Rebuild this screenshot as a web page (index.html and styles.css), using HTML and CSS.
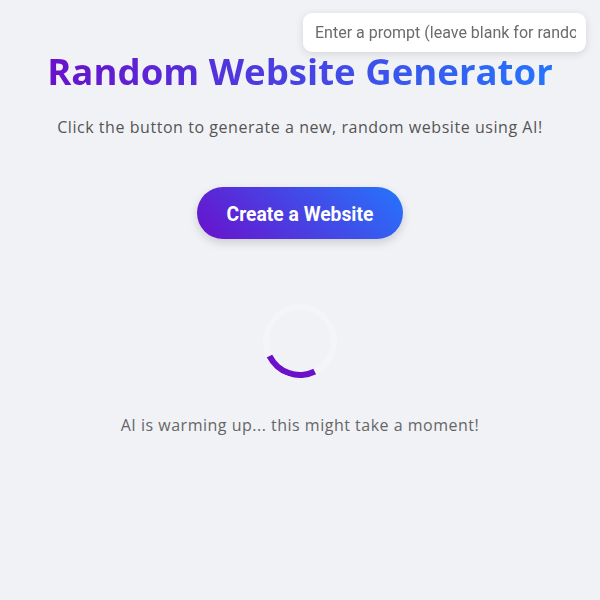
FILE: index.html
```html
<!DOCTYPE html>
<html>
<head>
<meta charset="utf-8">
<link rel="stylesheet" href="styles.css">
</head>
<body>
<div class="prompt-box"><input class="prompt" type="text" placeholder="Enter a prompt (leave blank for random)"></div>
<main class="container">
  <h1 class="title">Random Website Generator</h1>
  <p class="subtitle">Click the button to generate a new, random website using AI!</p>
  <button class="create">Create a Website</button>
  <div class="spinner"></div>
  <p class="loading">AI is warming up... this might take a moment!</p>
</main>
</body>
</html>
```
FILE: styles.css
```css
html, body { margin: 0; padding: 0; }
body {
  background: #f1f2f6;
  font-family: "Open Sans", "Liberation Sans", sans-serif;
  width: 600px;
  height: 600px;
  overflow: hidden;
}
.prompt-box {
  position: fixed;
  top: 13px;
  right: 14px;
}
.prompt {
  box-sizing: border-box;
  width: 283px;
  height: 39px;
  border: none;
  outline: none;
  border-radius: 9px;
  background: #fff;
  box-shadow: 0 2px 8px rgba(0,0,0,0.12);
  padding: 0 10px 0 12px;
  font-family: Roboto, sans-serif;
  font-size: 16px;
  color: #333;
}
.prompt::placeholder { color: #6b6b6b; }
.container {
  display: flex;
  flex-direction: column;
  align-items: center;
  text-align: center;
}
.title {
  margin: 48px 0 0;
  font-size: 36.6px;
  font-weight: 700;
  line-height: 46px;
  background: linear-gradient(90deg, #6a11cb, #2575fc);
  -webkit-background-clip: text;
  background-clip: text;
  color: transparent;
}
.subtitle {
  margin: 22px 0 0;
  font-size: 16px;
  letter-spacing: 0.55px;
  line-height: 22px;
  color: #555;
}
.create {
  margin-top: 49px;
  width: 206px;
  height: 52px;
  padding: 2px 0 0;
  border: none;
  border-radius: 26px;
  background: linear-gradient(45deg, #6a11cb, #2575fc);
  color: #fff;
  font-family: Roboto, sans-serif;
  font-weight: 700;
  font-size: 19.3px;
  box-shadow: 0 4px 10px rgba(0,0,0,0.15);
}
.spinner {
  margin-top: 65px;
  width: 62px;
  height: 62px;
  border: 6px solid #f4f5f8;
  border-top-color: #6a11cb;
  border-radius: 50%;
  transform: rotate(199deg);
}
.loading {
  margin: 36px 0 0;
  font-size: 16px;
  letter-spacing: 0.5px;
  line-height: 22px;
  color: #666;
}
```
